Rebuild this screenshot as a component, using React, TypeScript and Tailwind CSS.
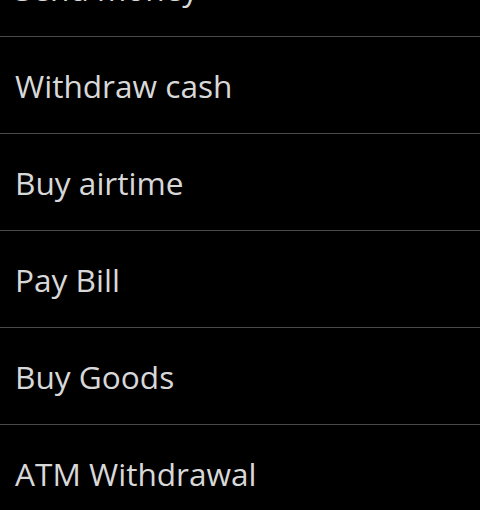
import React from "react";

const items = ["Send money", "Withdraw cash", "Buy airtime", "Pay Bill", "Buy Goods", "ATM Withdrawal"];

export default function App() {
  return (
    <div className="w-[480px] h-[510px] bg-black overflow-hidden" style={{ fontFamily: '"Open Sans", "DejaVu Sans", sans-serif' }}>
      <div className="-mt-[60px] flex flex-col">
        {items.map((t, i) => (
          <div key={t} className="flex flex-col">
            <div className="h-[96px] flex items-center pl-[15px] pt-[2px] text-[31.6px] text-[#d8d8d8]">{t}</div>
            {i < items.length - 1 && <div className="h-px bg-[#4a4a4a]" />}
          </div>
        ))}
      </div>
    </div>
  );
}
